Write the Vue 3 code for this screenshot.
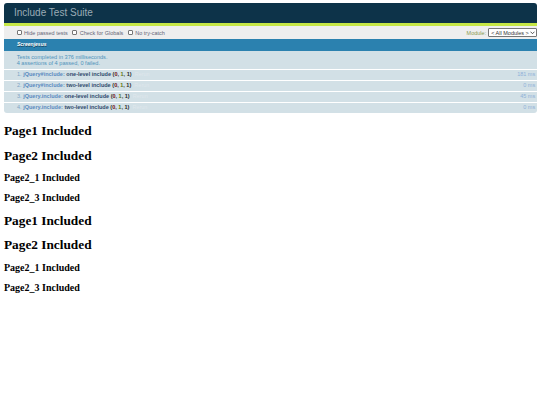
<script setup>
const tests = [
  { n: 1, mod: 'jQuery#include:', name: 'one-level include', ms: '181 ms' },
  { n: 2, mod: 'jQuery#include:', name: 'two-level include', ms: '0 ms' },
  { n: 3, mod: 'jQuery.include:', name: 'one-level include', ms: '45 ms' },
  { n: 4, mod: 'jQuery.include:', name: 'two-level include', ms: '0 ms' }
]
const pages = [
  { t: 'Page1 Included', big: true },
  { t: 'Page2 Included', big: true },
  { t: 'Page2_1 Included', big: false },
  { t: 'Page2_3 Included', big: false },
  { t: 'Page1 Included', big: true },
  { t: 'Page2 Included', big: true },
  { t: 'Page2_1 Included', big: false },
  { t: 'Page2_3 Included', big: false }
]
</script>

<template>
  <div class="page">
    <div class="suite">
      <h1 class="header">Include Test Suite</h1>
      <div class="banner"></div>
      <div class="toolbar">
        <div class="checks">
          <label class="check"><input type="checkbox" />Hide passed tests</label>
          <label class="check"><input type="checkbox" />Check for Globals</label>
          <label class="check"><input type="checkbox" />No try-catch</label>
        </div>
        <div class="module">
          <span>Module:</span>
          <div class="select-wrap">
            <select class="select"><option>&lt; All Modules &gt;</option></select>
            <svg class="chevron" viewBox="0 0 6 4" width="5" height="3.4">
              <path d="M0.6 0.8 L3 3.2 L5.4 0.8" fill="none" stroke="#333" stroke-width="1" />
            </svg>
          </div>
        </div>
      </div>
      <div class="agent">Screenjesus</div>
      <div class="result">
        Tests completed in 376 milliseconds.<br />
        4 assertions of 4 passed, 0 failed.
      </div>
      <ol class="tests">
        <li v-for="t in tests" :key="t.n" class="row">
          <span class="num">{{ t.n }}.</span>
          <span class="mod">{{ t.mod }}</span>
          <b class="name">{{ t.name }}</b>
          <b class="counts">(<span class="bad">0</span>, <span class="good">1</span>, 1)</b>
          <span class="rerun">Rerun</span>
          <span class="ms">{{ t.ms }}</span>
        </li>
      </ol>
    </div>
    <div class="pages">
      <div v-for="(p, i) in pages" :key="i" :class="p.big ? 'big' : 'small'">{{ p.t }}</div>
    </div>
  </div>
</template>

<style>
html, body { margin: 0; background: #fff; }
</style>

<style scoped>
.page { padding: 3.3px 3.3px 0 3.5px; width: 533.2px; }
.suite {
  font-family: "Liberation Sans", Arial, sans-serif;
  border-radius: 3px;
  overflow: hidden;
}
.header {
  margin: 0;
  height: 20px;
  line-height: 20px;
  padding-left: 10.5px;
  background: #0d3349;
  color: #9aabb5;
  font-size: 10px;
  font-weight: 400;
}
.banner { height: 2.7px; background: #c6e746; }
.toolbar {
  height: 13.3px;
  padding: 0 0 0 13.2px;
  background: #eee;
  color: #5e740b;
  font-size: 5.5px;
  display: flex;
  align-items: center;
  justify-content: space-between;
}
.checks { display: flex; gap: 4.5px; color: #667; }
.check { display: flex; align-items: center; }
.check input {
  appearance: none;
  width: 5.2px;
  height: 5.2px;
  margin: 0 2.2px 0 0;
  background: #fff;
  border: 0.6px solid #767676;
  border-radius: 1px;
  box-sizing: border-box;
}
.module { display: flex; align-items: center; gap: 2px; color: #8a9a50; }
.select-wrap { position: relative; display: flex; }
.select {
  appearance: none;
  width: 48.5px;
  height: 8.5px;
  padding: 0 0 0 2px;
  font-family: inherit;
  font-size: 5.5px;
  color: #333;
  background: #fff;
  border: 0.6px solid #767676;
  border-radius: 1px;
}
.chevron { position: absolute; right: 1.5px; top: 2.7px; }
.agent {
  height: 11.4px;
  line-height: 11.4px;
  padding-left: 13.5px;
  background: #2b81af;
  color: #fff;
  font-size: 5px;
  font-weight: 700;
  font-style: italic;
  text-shadow: 0.5px 0.5px 0.5px rgba(0,0,0,.5);
}
.result {
  height: 18.3px;
  padding: 3.2px 0 0 13.2px;
  box-sizing: border-box;
  background: #d2e0e6;
  color: #4f93bb;
  font-size: 5.6px;
  line-height: 6.4px;
}
.tests {
  margin: 0;
  padding: 0;
  list-style: none;
}
.row {
  height: 10.1px;
  line-height: 9.6px;
  margin-top: 1px;
  padding: 0 1.5px 0 13.5px;
  background: #d2e0e6;
  font-size: 5.5px;
  color: #366097;
  display: flex;
  gap: 1.6px;
}
.num { color: #7fa3c4; }
.mod { color: #5a8ac0; font-weight: 700; }
.name { color: #2f4a6d; }
.counts { color: #2b2b2b; }
.bad { color: #710909; }
.good { color: #5e740b; }
.rerun { color: #dfe7ec; margin-left: 1.5px; }
.ms { margin-left: auto; color: #8fb0d8; }
.pages { font-family: "Liberation Serif", "Times New Roman", serif; color: #000; font-weight: 700; padding-left: 0.5px; }
.big { font-size: 13.3px; line-height: 16px; margin-top: 8.5px; }
.small { font-size: 10px; line-height: 12px; margin-top: 8.3px; }
.pages > .big:first-child { margin-top: 10px; }
</style>
